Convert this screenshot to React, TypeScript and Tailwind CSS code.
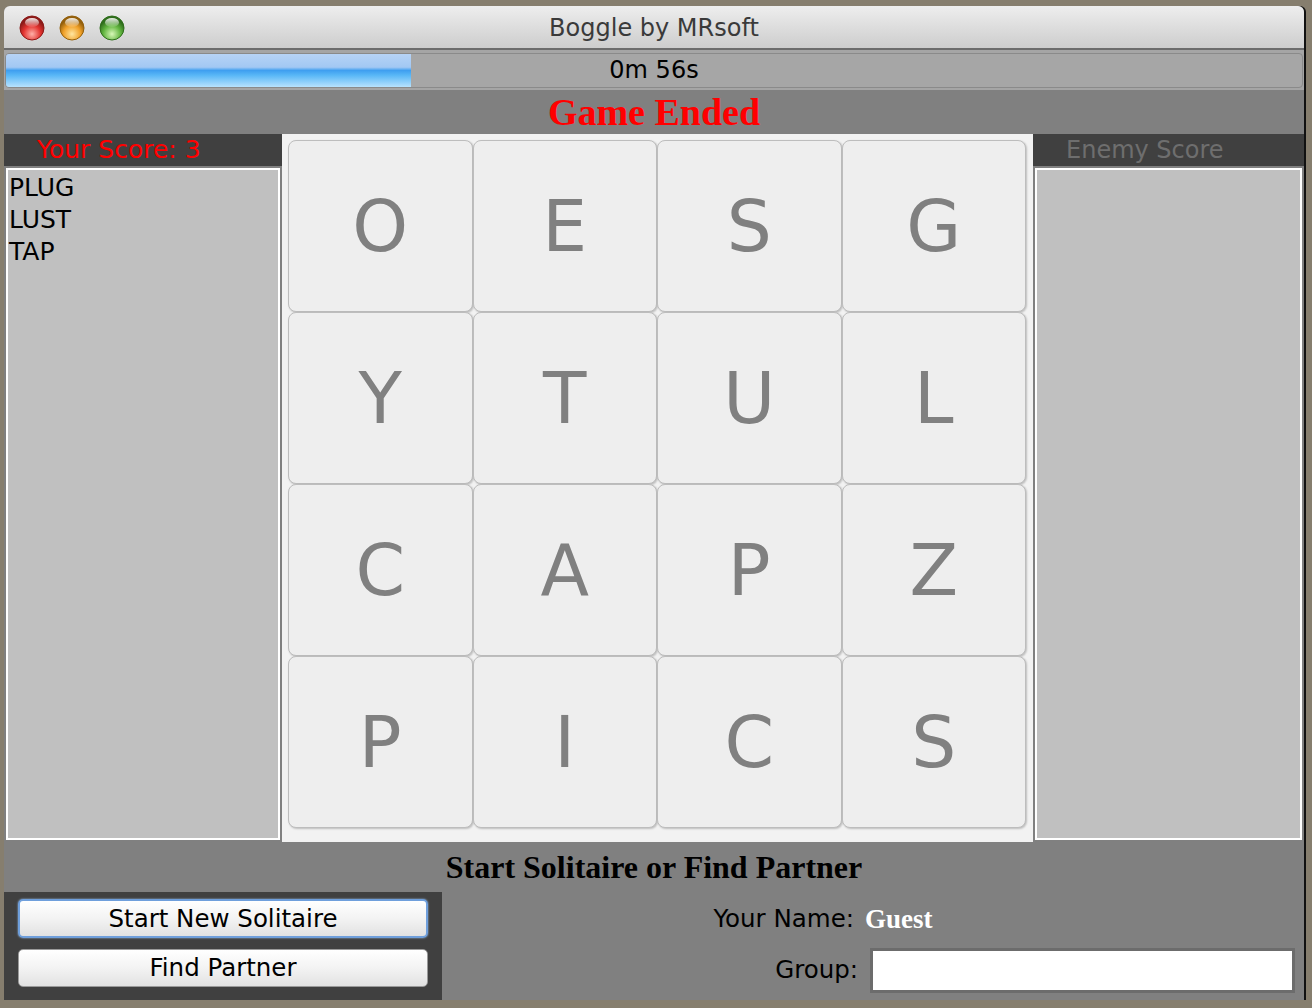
import React from "react";

const letters = ["O", "E", "S", "G", "Y", "T", "U", "L", "C", "A", "P", "Z", "P", "I", "C", "S"];
const words = ["PLUG", "LUST", "TAP"];

const ui = { fontFamily: '"DejaVu Sans", "Liberation Sans", sans-serif' };
const serif = { fontFamily: '"Liberation Serif", "DejaVu Serif", serif' };

function Light({ id, base, light, dark }: { id: string; base: string; light: string; dark: string }) {
  return (
    <svg width="26" height="26" viewBox="0 0 26 26">
      <defs>
        <radialGradient id={`${id}-g`} cx="50%" cy="75%" r="60%">
          <stop offset="0%" stopColor={light} />
          <stop offset="60%" stopColor={base} />
          <stop offset="100%" stopColor={dark} />
        </radialGradient>
        <linearGradient id={`${id}-h`} x1="0" y1="0" x2="0" y2="1">
          <stop offset="0%" stopColor="#ffffff" stopOpacity="0.9" />
          <stop offset="100%" stopColor="#ffffff" stopOpacity="0.1" />
        </linearGradient>
      </defs>
      <circle cx="13" cy="13" r="12" fill={`url(#${id}-g)`} stroke={dark} strokeWidth="1" />
      <ellipse cx="13" cy="7.5" rx="7" ry="4.5" fill={`url(#${id}-h)`} />
    </svg>
  );
}

function Tile({ ch }: { ch: string }) {
  return (
    <div className="flex items-center justify-center rounded-[8px] border border-[#bdbdbd] bg-[#eeeeee] shadow-[1px_1px_2px_rgba(0,0,0,0.22)]">
      <span className="text-[71px] leading-none text-[#808080]" style={ui}>
        {ch}
      </span>
    </div>
  );
}

export default function App() {
  return (
    <div className="h-[1008px] w-[1312px] overflow-hidden bg-[#867e6e] pl-[4px] pt-[6px]" style={ui}>
      <div className="flex h-[994px] w-[1300px] flex-col overflow-hidden rounded-t-[6px] bg-[#808080] shadow-[2px_0_0_#111]">
        {/* title bar */}
        <div className="relative flex h-[42px] items-center justify-center bg-gradient-to-b from-[#eeeeee] to-[#cdcdcd] pt-[2px]">
          <div className="absolute left-[15px] top-[9px] flex gap-[14px]">
            <Light id="r" base="#e2322f" light="#ffb0a8" dark="#8c1a18" />
            <Light id="o" base="#f0a028" light="#ffe6a0" dark="#94600c" />
            <Light id="g" base="#62b540" light="#d8f8b8" dark="#2f6e1c" />
          </div>
          <span className="text-[24px] text-[#3a3a3a]">Boggle by MRsoft</span>
        </div>
        <div className="h-[2px] bg-[#6c6c6c]" />

        {/* progress */}
        <div className="flex h-[40px] items-center bg-[#a5a5a5] px-[1px]">
          <div className="relative flex h-[35px] w-full items-center justify-center overflow-hidden rounded-[4px] border border-[#8a8a8a] bg-[#a6a6a6]">
            <div className="absolute left-0 top-0 h-full w-[405px] bg-[linear-gradient(to_bottom,#b6d3f6_0%,#a2c8f3_40%,#3f9ff0_50%,#5ab8f7_65%,#b8e2fd_100%)]" />
            <span className="relative text-[24px] text-black">0m 56s</span>
          </div>
        </div>

        {/* status */}
        <div className="flex h-[44px] items-center justify-center bg-[#808080]">
          <span className="text-[38px] font-bold leading-none text-[#ff0000]" style={serif}>
            Game Ended
          </span>
        </div>

        {/* main */}
        <div className="flex h-[708px]">
          <div className="flex w-[278px] flex-col bg-[#808080]">
            <div className="flex h-[32px] items-center bg-[#404040] pl-[33px] text-[25px] text-[#ff0000]">Your Score: 3</div>
            <div className="mx-[2px] mb-[2px] mt-[2px] flex-1 border-2 border-white bg-[#c0c0c0] px-[1px] pt-[2px]">
              {words.map((w) => (
                <div key={w} className="h-[32px] text-[25px] leading-[32px] text-black">
                  {w}
                </div>
              ))}
            </div>
          </div>

          <div className="w-[751px] bg-[#f2f2f2] pb-[14px] pl-[6px] pr-[7px] pt-[6px]">
            <div className="grid h-full grid-cols-4 grid-rows-4">
              {letters.map((ch, i) => (
                <Tile key={i} ch={ch} />
              ))}
            </div>
          </div>

          <div className="flex w-[271px] flex-col bg-[#808080]">
            <div className="flex h-[32px] items-center bg-[#404040] pl-[33px] text-[24px] text-[#6e6e6e]">Enemy Score</div>
            <div className="mx-[2px] mb-[2px] mt-[2px] flex-1 border-2 border-white bg-[#c0c0c0]" />
          </div>
        </div>

        {/* bottom */}
        <div className="flex flex-1 flex-col bg-[#808080]">
          <div className="flex h-[50px] items-center justify-center">
            <span className="text-[32px] font-bold leading-none text-black" style={serif}>
              Start Solitaire or Find Partner
            </span>
          </div>
          <div className="flex flex-1">
            <div className="flex w-[438px] flex-col gap-[11px] bg-[#404040] pl-[14px] pr-[14px] pt-[7px]">
              <button className="h-[39px] rounded-[5px] border-2 border-[#6f9fdc] bg-gradient-to-b from-[#ffffff] via-[#f3f3f3] to-[#e2e2e2] text-[24.5px] text-black shadow-[0_0_2px_#9cc4f0]">
                Start New Solitaire
              </button>
              <button className="h-[38px] rounded-[5px] border border-[#9a9a9a] bg-gradient-to-b from-[#ffffff] via-[#f3f3f3] to-[#e2e2e2] text-[24.5px] text-black">
                Find Partner
              </button>
            </div>
            <div className="flex flex-1 flex-col">
              <div className="flex h-[54px] items-center">
                <span className="w-[412px] text-right text-[24.5px] text-black">Your Name:</span>
                <span className="ml-[11px] text-[27px] font-bold text-white" style={serif}>
                  Guest
                </span>
              </div>
              <div className="flex h-[48px] items-center">
                <span className="w-[416px] text-right text-[24.5px] text-black">Group:</span>
                <input
                  className="ml-[12px] h-[45px] w-[425px] border-[3px] border-[#6c6c6c] bg-white outline-none"
                  defaultValue=""
                />
              </div>
            </div>
          </div>
        </div>
      </div>
    </div>
  );
}
